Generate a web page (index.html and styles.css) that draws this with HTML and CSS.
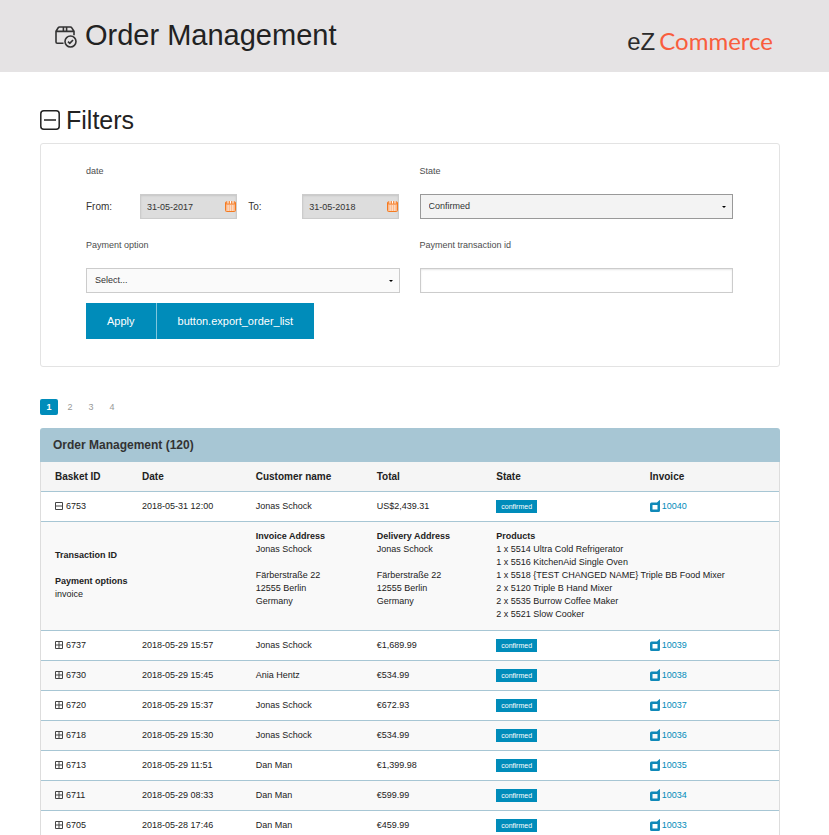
FILE: index.html
```html
<!DOCTYPE html>
<html lang="en">
<head>
<meta charset="utf-8">
<title>Order Management</title>
<link rel="stylesheet" href="styles.css">
</head>
<body>
<svg class="defs" aria-hidden="true">
  <symbol id="plus" viewBox="0 0 8 8"><path d="M.5.5h7v7h-7zM1 4h6M4 1v6" fill="none" stroke="#444"/></symbol>
  <symbol id="minus" viewBox="0 0 8 8"><path d="M.5.5h7v7h-7zM1 4h6" fill="none" stroke="#444"/></symbol>
  <symbol id="doc" viewBox="0 0 10 12"><path fill="#1089b8" fill-rule="evenodd" d="M1.5 2.5H7L9.6 0 10 .3V10.5Q10 12 8.5 12h-7Q0 12 0 10.5V4Q0 2.500 1.500 2.500zM2.500 5v4.500h5V5z"/></symbol>
  <symbol id="calendar" viewBox="0 0 11 11"><rect x=".5" y=".8" width="10" height="9.700" rx="1" fill="#fbb88a" stroke="#f47a20"/><path d="M1 1h9v2.500H1z" fill="#f68c40"/><path d="M3 0v2.500M5.500 0v2.500M8 0v2.500" stroke="#fff"/><path d="M2.500 5h6M2.500 7h6M2.500 9h6" stroke="#fff" stroke-dasharray="1.300 1"/></symbol>
</svg>

<header class="top">
  <h1>
    <svg class="box-icon" viewBox="0 0 22 22" fill="none" stroke="#333" stroke-width="1.6" aria-hidden="true">
      <path d="M8.500 17.200H2.200Q1 17.200 1 16V5.200L3.200 1.800Q3.700 1 4.600 1h10.800q.9 0 1.400.8L19 5.200v4M1 5.400h18M8.400 1v4.400M11.600 1v4.400"/>
      <circle cx="15.500" cy="15.500" r="5.500"/><path d="m13 15.600 1.800 1.800 3.200-3.400"/>
    </svg>
    Order Management
  </h1>
  <div class="logo"><span class="logo-ez">eZ</span><span class="logo-name">Commerce</span></div>
</header>

<main>
  <h2>
    <svg class="toggle-icon" viewBox="0 0 20 20" fill="none" stroke="#222" stroke-width="1.5" aria-hidden="true"><rect x=".8" y=".8" width="18.4" height="18.4" rx="3"/><path d="M4 10h12"/></svg>
    Filters
  </h2>

  <form class="filters">
    <div class="fields">
      <div class="field">
        <span class="label">date</span>
        <div class="dates">
          <label for="from">From:</label>
          <div class="date"><input id="from" type="text" value="31-05-2017"><svg><use href="#calendar"/></svg></div>
          <label for="to" class="to">To:</label>
          <div class="date"><input id="to" type="text" value="31-05-2018"><svg><use href="#calendar"/></svg></div>
        </div>
      </div>
      <div class="field">
        <label class="label" for="state">State</label>
        <div class="select active"><select id="state"><option>Confirmed</option></select></div>
      </div>
      <div class="field">
        <label class="label" for="payment">Payment option</label>
        <div class="select"><select id="payment"><option>Select...</option></select></div>
      </div>
      <div class="field">
        <label class="label" for="transaction">Payment transaction id</label>
        <input id="transaction" class="text" type="text">
      </div>
    </div>
    <div class="buttons"><button type="button">Apply</button><button type="button">button.export_order_list</button></div>
  </form>

  <nav class="pages" aria-label="Pages"><a class="current" href="#">1</a><a href="#">2</a><a href="#">3</a><a href="#">4</a></nav>

  <table>
    <caption>Order Management (120)</caption>
    <colgroup><col class="c-id"><col class="c-date"><col class="c-name"><col class="c-total"><col class="c-state"><col></colgroup>
    <thead><tr><th>Basket ID</th><th>Date</th><th>Customer name</th><th>Total</th><th>State</th><th>Invoice</th></tr></thead>
    <tbody>
      <tr><td><svg class="exp"><use href="#minus"/></svg>6753</td><td>2018-05-31 12:00</td><td>Jonas Schock</td><td>US$2,439.31</td><td><span class="badge">confirmed</span></td><td><a href="#"><svg class="doc"><use href="#doc"/></svg>10040</a></td></tr>
      <tr class="details">
        <td colspan="2" class="middle"><b>Transaction ID</b><br><br><b>Payment options</b><br>invoice</td>
        <td><b class="head">Invoice Address</b>Jonas Schock<br><br>Färberstraße 22<br>12555 Berlin<br>Germany</td>
        <td><b class="head">Delivery Address</b>Jonas Schock<br><br>Färberstraße 22<br>12555 Berlin<br>Germany</td>
        <td colspan="2"><b class="head">Products</b>1 x 5514 Ultra Cold Refrigerator<br>1 x 5516 KitchenAid Single Oven<br>1 x 5518 {TEST CHANGED NAME} Triple BB Food Mixer<br>2 x 5120 Triple B Hand Mixer<br>2 x 5535 Burrow Coffee Maker<br>2 x 5521 Slow Cooker</td>
      </tr>
      <tr><td><svg class="exp"><use href="#plus"/></svg>6737</td><td>2018-05-29 15:57</td><td>Jonas Schock</td><td>€1,689.99</td><td><span class="badge">confirmed</span></td><td><a href="#"><svg class="doc"><use href="#doc"/></svg>10039</a></td></tr>
      <tr><td><svg class="exp"><use href="#plus"/></svg>6730</td><td>2018-05-29 15:45</td><td>Ania Hentz</td><td>€534.99</td><td><span class="badge">confirmed</span></td><td><a href="#"><svg class="doc"><use href="#doc"/></svg>10038</a></td></tr>
      <tr><td><svg class="exp"><use href="#plus"/></svg>6720</td><td>2018-05-29 15:37</td><td>Jonas Schock</td><td>€672.93</td><td><span class="badge">confirmed</span></td><td><a href="#"><svg class="doc"><use href="#doc"/></svg>10037</a></td></tr>
      <tr><td><svg class="exp"><use href="#plus"/></svg>6718</td><td>2018-05-29 15:30</td><td>Jonas Schock</td><td>€534.99</td><td><span class="badge">confirmed</span></td><td><a href="#"><svg class="doc"><use href="#doc"/></svg>10036</a></td></tr>
      <tr><td><svg class="exp"><use href="#plus"/></svg>6713</td><td>2018-05-29 11:51</td><td>Dan Man</td><td>€1,399.98</td><td><span class="badge">confirmed</span></td><td><a href="#"><svg class="doc"><use href="#doc"/></svg>10035</a></td></tr>
      <tr><td><svg class="exp"><use href="#plus"/></svg>6711</td><td>2018-05-29 08:33</td><td>Dan Man</td><td>€599.99</td><td><span class="badge">confirmed</span></td><td><a href="#"><svg class="doc"><use href="#doc"/></svg>10034</a></td></tr>
      <tr><td><svg class="exp"><use href="#plus"/></svg>6705</td><td>2018-05-28 17:46</td><td>Dan Man</td><td>€459.99</td><td><span class="badge">confirmed</span></td><td><a href="#"><svg class="doc"><use href="#doc"/></svg>10033</a></td></tr>
    </tbody>
  </table>
</main>
</body>
</html>
```

FILE: styles.css
```css
* { box-sizing: border-box; }
html { scrollbar-width: none; }
body {
  margin: 0;
  background: #fff;
  color: #222;
  font: 9px/13px "Liberation Sans", Arial, sans-serif;
}
.defs { display: block; width: 0; height: 0; }
a { color: #008cba; text-decoration: none; }
input, select, button { font: inherit; border-radius: 0; margin: 0; }

.top {
  display: flex;
  justify-content: space-between;
  align-items: center;
  padding: 0 56px 0 55px;
  background: #e5e3e4;
}
h1, h2 { display: flex; align-items: center; margin: 0; font-weight: 400; }
h1 { gap: 8px; padding-bottom: 2px; font-size: 29px; line-height: 70px; }
.box-icon { width: 22px; height: 22px; margin-top: 3px; }
.logo { display: flex; align-items: baseline; gap: 4px; line-height: 32px; padding-top: 10px; }
.logo-ez { font-size: 24px; color: #2b2b2b; }
.logo-name { font-family: Lato, sans-serif; font-size: 24px; color: #f95d3d; }

main { padding: 0 49px 0 40px; }
h2 { gap: 6px; padding-top: 32px; font-size: 25px; line-height: 32px; }
.toggle-icon { width: 20px; height: 20px; }

.filters {
  margin-top: 7px;
  padding: 15px 46px 27px 45px;
  border: 1px solid #e3e3e3;
  border-radius: 3px;
}
.fields { display: grid; grid-template-columns: 1fr 1fr; gap: 14px 20px; color: #4d4d4d; }
.label { display: block; height: 35px; line-height: 24px; }
.dates {
  display: grid;
  grid-template-columns: 54fr 97fr 65fr 97fr;
  align-items: center;
  font-size: 10px;
  color: #333;
}
.to { padding-left: 11px; }
.date { position: relative; }
.date input {
  display: block;
  width: 100%;
  height: 25px;
  padding: 0 6px;
  font-size: 9px;
  color: #333;
  background: #ddd;
  border: 1px solid #ccc;
  box-shadow: inset 0 1px 2px rgba(0, 0, 0, .1);
}
.date svg { position: absolute; top: 7px; right: 1px; width: 11px; height: 11px; }
.select { position: relative; }
.select::after {
  content: "";
  position: absolute;
  top: 12px;
  right: 7px;
  border: 2px solid transparent;
  border-top-color: #000;
}
.select select, .text {
  display: block;
  appearance: none;
  width: 100%;
  height: 25px;
  padding: 0 8px;
  color: #333;
  background: #fafafa;
  border: 1px solid #ccc;
}
.select.active select { background: #f3f3f3; border-color: #999; }
.text { background: #fff; box-shadow: inset 0 1px 2px rgba(0, 0, 0, .1); }

.buttons { display: flex; margin-top: 10px; }
button {
  height: 36px;
  padding: 0 21px;
  border: 0;
  font-size: 11px;
  color: #fff;
  background: #008cba;
}
button + button { border-left: 1px solid #80c6dd; }

.pages { display: flex; gap: 3px; margin: 32px 0 13px; }
.pages a { width: 18px; height: 16px; line-height: 16px; text-align: center; color: #999; border-radius: 2px; }
.pages .current { font-weight: 700; color: #fff; background: #008cba; }

table {
  width: 100%;
  table-layout: fixed;
  border-spacing: 0;
  border: solid #ddd;
  border-width: 0 1px;
}
caption {
  padding: 0 13px;
  font-size: 12px;
  font-weight: 700;
  line-height: 34px;
  text-align: left;
  color: #333;
  background: #a7c6d4;
  border-radius: 3px 3px 0 0;
}
.c-id { width: 11.8%; }
.c-date { width: 15.4%; }
.c-name { width: 16.4%; }
.c-total { width: 16.2%; }
.c-state { width: 20.8%; }
th, td {
  height: 30px;
  padding: 0 0 0 14px;
  text-align: left;
  border-bottom: 1px solid #a7c6d4;
}
th { font-size: 10px; background: #f5f5f5; }
tbody tr:nth-child(even) { background: #f9f9f9; }
.details td { padding: 7px 0 9px 14px; vertical-align: top; }
.details .middle { vertical-align: middle; }
.head { display: block; line-height: 14px; }
.exp { width: 8px; height: 8px; margin-right: 3px; vertical-align: -1px; }
.doc { width: 10px; height: 12px; margin-right: 2px; vertical-align: -3px; }
.badge {
  display: inline-block;
  padding: 0 5px;
  font-size: 7px;
  color: #fff;
  background: #008cba;
}
```
